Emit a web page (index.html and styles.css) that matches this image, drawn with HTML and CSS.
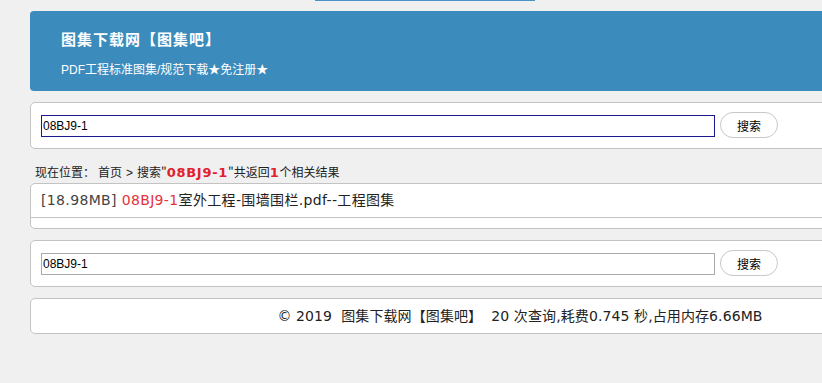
FILE: index.html
```html
<!DOCTYPE html>
<html lang="zh-CN">

<head>
  <meta charset="UTF-8">
  <title>08BJ9-1 - 图集下载网【图集吧】</title>
  <link rel="stylesheet" href="styles.css">
</head>

<body>

  <div class="top-line"></div>

  <div class="wrap">
    <!-- Header -->
    <div class="header">
      <h1>图集下载网【图集吧】</h1>
      <p>PDF工程标准图集/规范下载★免注册★</p>
    </div>

    <!-- Search top -->
    <form class="panel search-box">
      <input type="text" class="kw kw-focus" value="08BJ9-1">
      <button type="button" class="btn-search">搜索</button>
    </form>

    <div class="position"><span class="here">现在位置：</span><span class="crumb">首页</span><span class="sep">&gt;</span>搜索"<b>08BJ9-1</b>"共返回<b>1</b>个相关结果</div>

    <!-- Results -->
    <div class="panel result-list">
      <div class="result-item">
        <span class="size">[18.98MB]</span> <span class="hl">08BJ9-1</span>室外工程-围墙围栏.pdf--工程图集
      </div>
    </div>

    <!-- Search bottom -->
    <form class="panel search-box">
      <input type="text" class="kw" value="08BJ9-1">
      <button type="button" class="btn-search">搜索</button>
    </form>

    <!-- Footer -->
    <div class="panel footer">
      © 2019&nbsp; 图集下载网【图集吧】&nbsp; 20 次查询,耗费0.745 秒,占用内存6.66MB
    </div>
  </div>

</body>

</html>
```

FILE: styles.css
```css
html {
  overflow: hidden;
}

body {
  margin: 0;
  padding: 0;
  background: #f0f0f0;
  color: #222;
  font-family: "Liberation Sans", Arial, "Noto Sans CJK SC", sans-serif;
  font-size: 12px;
}

.top-line {
  width: 220px;
  height: 1px;
  margin-left: 315px;
  background: #4a93c8;
}

.wrap {
  width: 980px;
  margin-left: 30px;
}

/* Header */
.header {
  margin-top: 10px;
  height: 80px;
  box-sizing: border-box;
  padding: 19px 0 0 31px;
  background: #3b8bbd;
  border-radius: 4px;
  color: #fff;
}

.header h1 {
  margin: 0;
  font-size: 15px;
  line-height: 18px;
  letter-spacing: 1px;
  font-weight: bold;
  font-family: "Noto Sans CJK SC", sans-serif;
}

.header p {
  margin: 14px 0 0;
  font-size: 12px;
  line-height: 16px;
  font-family: "Liberation Sans", Arial, "Noto Sans CJK SC", sans-serif;
}

/* Panels */
.panel {
  background: #fff;
  border: 1px solid #c3c3c3;
  border-radius: 5px;
}

.search-box {
  display: flex;
  align-items: center;
  height: 45px;
  margin: 11px 0 0;
  padding: 0 10px;
}

.kw {
  width: 674px;
  height: 22px;
  box-sizing: border-box;
  margin: 0;
  padding: 0 1px;
  border: 1px solid #aaa;
  font-family: "Liberation Sans", Arial, sans-serif;
  font-size: 12px;
  color: #000;
  outline: none;
}

.kw-focus {
  border-color: #1a1a8c;
}

.btn-search {
  width: 58px;
  height: 26px;
  margin: -1px 0 0 5px;
  padding: 0;
  background: #fff;
  border: 1px solid #c8c8c8;
  border-radius: 13px;
  font-family: "Noto Sans CJK SC", sans-serif;
  font-size: 12px;
  color: #000;
  cursor: pointer;
}

/* Breadcrumb */
.position {
  height: 22px;
  padding: 12px 0 0 5px;
  line-height: 22px;
  font-family: "Noto Sans CJK SC", sans-serif;
  font-size: 12px;
  color: #222;
}

.position .here {
  margin-right: 3px;
}

.position .sep {
  margin: 0 4px 0 4px;
  font-family: "Liberation Sans", Arial, sans-serif;
}

.position b {
  color: #e0202c;
  font-family: "DejaVu Sans", Verdana, sans-serif;
  font-size: 13px;
  letter-spacing: 0.7px;
}

/* Results */
.result-list {
  height: 44px;
}

.result-item {
  height: 33px;
  padding-left: 10px;
  line-height: 33px;
  border-bottom: 1px solid #c3c3c3;
  font-family: "DejaVu Sans", Verdana, "Noto Sans CJK SC", sans-serif;
  font-size: 14px;
  letter-spacing: 0.35px;
  color: #222;
}

.result-item .size {
  color: #444;
}

.result-item .hl {
  color: #e8303a;
}

/* Footer */
.footer {
  height: 34px;
  margin-top: 11px;
  line-height: 34px;
  text-align: center;
  font-family: "DejaVu Sans", Verdana, "Noto Sans CJK SC", sans-serif;
  font-size: 14px;
  letter-spacing: 0.1px;
  color: #222;
}
```
